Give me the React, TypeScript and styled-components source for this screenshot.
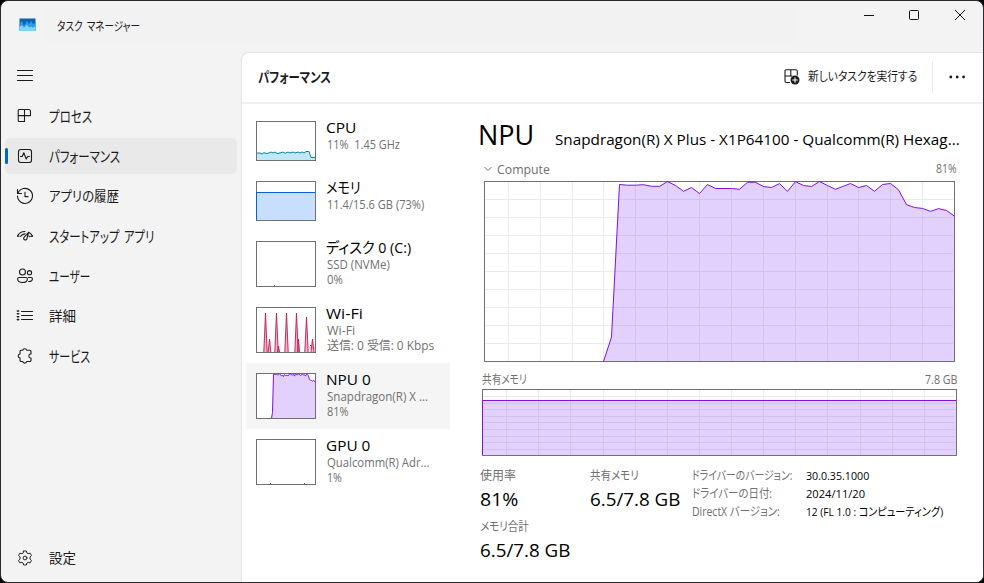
import React, { useLayoutEffect, useRef, useState } from "react";
import styled, { createGlobalStyle } from "styled-components";

const GlobalStyle = createGlobalStyle`
  * { box-sizing: border-box; }
  body {
    margin: 0;
    background: #000;
    font-family: "Open Sans", "Noto Sans CJK JP", sans-serif;
    color: #1b1b1b;
  }
`;

const FitBox = styled.span<{ $w: number }>`
  display: block;
  width: ${(p) => p.$w}px;
  flex: none;
  white-space: pre;
`;
const FitText = styled.span`
  display: inline-block;
  vertical-align: top;
  transform-origin: 0 50%;
  font-feature-settings: "palt";
`;

/* Condenses a label horizontally so that it fills exactly the given width. */
function Fit({ w, children }: { w: number; children: React.ReactNode }) {
  const ref = useRef<HTMLSpanElement>(null);
  const [scale, setScale] = useState(1);
  useLayoutEffect(() => {
    if (ref.current) setScale(w / ref.current.offsetWidth);
  }, [w]);
  return (
    <FitBox $w={w}>
      <FitText ref={ref} style={{ transform: `scaleX(${scale})` }}>{children}</FitText>
    </FitBox>
  );
}

const Window = styled.div`
  width: 984px;
  height: 583px;
  display: flex;
  flex-direction: column;
  border: 1px solid #2d2a2e;
  border-radius: 8px;
  background: #f3f3f3;
  overflow: hidden;
`;
const TitleBar = styled.header`
  display: flex;
  height: 51px;
  flex: none;
`;
const AppMark = styled.div`
  width: 45px;
  padding: 17px 0 0 18px;
  svg { display: block; }
`;
const DragRegion = styled.div`
  width: 751px;
  height: 36px;
  margin-top: 7px;
  padding-left: 11px;
  background: #f2f2f2;
  font-size: 12.5px;
  line-height: 37px;
  word-spacing: 2px;
`;
const Caption = styled.div`
  margin-left: auto;
  display: flex;
  height: 28px;
`;
const CaptionButton = styled.button`
  width: 46px;
  padding: 0;
  border: 0;
  background: none;
  display: grid;
  place-items: center;
`;
const Columns = styled.div`
  display: flex;
  flex: 1;
  min-height: 0;
`;
const Sidebar = styled.nav`
  width: 240px;
  flex: none;
  display: flex;
  flex-direction: column;
  gap: 4px;
  padding: 6px 4px 6px;
`;
const NavItem = styled.button<{ $active?: boolean; $bottom?: boolean; $size?: number }>`
  width: 232px;
  height: 36px;
  flex: none;
  margin: ${(p) => (p.$bottom ? "auto 0 0" : "0")};
  padding: 0;
  border: 0;
  border-radius: 5px;
  display: flex;
  align-items: center;
  background: ${(p) => (p.$active ? "#e9e9e9" : "transparent")};
  color: #1b1b1b;
  font: inherit;
  font-size: ${(p) => p.$size ?? 14}px;
  line-height: 20px;
  word-spacing: 2px;
  svg { width: 18px; height: 18px; margin-right: 15px; flex: none; }
`;
const Marker = styled.i<{ $on?: boolean }>`
  width: 3px;
  height: 16px;
  margin-right: 8px;
  border-radius: 2px;
  background: ${(p) => (p.$on ? "#0067c0" : "transparent")};
`;
const Panel = styled.main`
  flex: 1;
  min-width: 0;
  display: flex;
  flex-direction: column;
  background: #fff;
  border: 1px solid #e5e5e5;
  border-width: 1px 0 0 1px;
  border-top-left-radius: 8px;
`;
const Toolbar = styled.div`
  height: 51px;
  flex: none;
  display: flex;
  align-items: center;
  padding: 0 0 1px 15px;
  border-bottom: 2px solid #f0f0f0;
`;
const Heading = styled.h1`
  margin: 0 auto 0 0;
  padding-left: 1px;
  font-size: 14px;
  line-height: 20px;
  font-weight: 600;
`;
const ToolButton = styled.button`
  display: flex;
  align-items: center;
  gap: 8px;
  padding: 0;
  border: 0;
  background: none;
  color: #1b1b1b;
  font: inherit;
  font-size: 12.5px;
  line-height: 20px;
`;
const Rule = styled.i`
  width: 1px;
  height: 32px;
  margin: 0 16px 0 15px;
  background: #ebebeb;
`;
const MoreButton = styled(ToolButton)`
  width: 34px;
`;
const Body = styled.div`
  flex: 1;
  min-height: 0;
  display: flex;
`;
const ResourceList = styled.div`
  width: 208px;
  flex: none;
  padding: 7px 0 0 4px;
`;
const Resource = styled.div<{ $active?: boolean; $h: number }>`
  width: 204px;
  height: ${(p) => p.$h}px;
  display: flex;
  gap: 10px;
  padding-left: 10px;
  background: ${(p) => (p.$active ? "#f5f5f5" : "transparent")};
  svg { margin-top: 10px; flex: none; }
`;
const ResourceText = styled.div`
  padding-top: 6px;
`;
const ResourceName = styled.div`
  color: #000;
  font-size: 15px;
  line-height: 20px;
`;
const ResourceInfo = styled.div`
  color: #707070;
  font-size: 12px;
  line-height: 15px;
  padding-left: 1px;
`;
const Detail = styled.section`
  flex: 1;
  padding: 11px 0 0 28px;
  color: #000;
`;
const DetailTitle = styled.div`
  display: flex;
  align-items: baseline;
  height: 41px;
  gap: 21px;
  line-height: 40px;
`;
const BigName = styled.div`
  font-size: 27px;
`;
const DeviceName = styled.div`
  font-size: 15px;
`;
const ChartCaption = styled.div<{ $inset: number; $h: number; $drop?: number }>`
  display: flex;
  align-items: center;
  justify-content: space-between;
  width: 479px;
  height: ${(p) => p.$h}px;
  padding-top: ${(p) => p.$drop ?? 0}px;
  padding-left: ${(p) => p.$inset}px;
  color: #707070;
  font-size: 12px;
  line-height: 18px;
`;
const CaptionLabel = styled.div<{ $size?: number }>`
  display: flex;
  align-items: center;
  gap: 5px;
  font-size: ${(p) => p.$size ?? 12}px;
`;
const ChartArea = styled.div<{ $inset: number }>`
  padding-left: ${(p) => p.$inset}px;
  svg { display: block; }
`;
const Stats = styled.div`
  display: flex;
  padding: 11px 0 0 2px;
`;
const StatColumn = styled.div<{ $w: number }>`
  width: ${(p) => p.$w}px;
`;
const StatLabel = styled.div`
  color: #707070;
  font-size: 12px;
  line-height: 18px;
`;
const StatValue = styled.div`
  height: 33px;
  font-size: 19px;
  line-height: 28px;
`;
const Facts = styled.dl`
  margin: 0;
  display: grid;
  grid-template-columns: 114px auto;
  grid-auto-rows: 18px;
  line-height: 18px;
  font-size: 12px;
  dt { color: #707070; }
  dd { margin: 0; font-size: 11.5px; }
`;

const stroke = { fill: "none", stroke: "#1b1b1b", strokeWidth: 1.1, strokeLinecap: "round", strokeLinejoin: "round" } as const;

const icons: Record<string, React.ReactNode> = {
  menu: <path d="M1.5 3.5h15M1.5 8.5h15M1.5 13.5h15" strokeWidth="1" />,
  processes: <path d="M3.2 2.5h9.3a2 2 0 0 1 2 2v4.1H2.2V3.5a1 1 0 0 1 1-1zM2.2 8.6v4.9a1 1 0 0 0 1 1h5.3v-12M14.4 8.6H2.2" />,
  performance: <g><rect x="2.5" y="2.5" width="13" height="13" rx="2.2" /><path d="M4.5 9.5h1.7l1.6-3.8 2.4 6.3 1.5-2.5h1.8" /></g>,
  history: <g><path d="M1.5 2.5v4h4M2 6.2A7.5 7.5 0 1 1 1.5 9M9 5.3v4.3h3" /></g>,
  startup: <g><path d="M1.5 9.1C2.8 6.3 5.6 4.5 9 4.5M12.6 5.3c1.7.8 3.1 2.1 3.9 3.8M4.5 9.4C5.6 8 7 7 9 6.9M12.7 8.8l.9.8" /><path d="M12.6 5.4 10.8 12a1.6 1.6 0 1 1-3-1.3zM1.5 9.1l1.7.2M16.5 9.1l-1.7.3" /></g>,
  users: <g><circle cx="6.5" cy="5" r="3" /><circle cx="13.5" cy="5.7" r="2.1" /><path d="M3 10.5h7a1.4 1.4 0 0 1 1.4 1.4c0 2.3-1.8 3.6-4.9 3.6s-4.9-1.3-4.9-3.6A1.4 1.4 0 0 1 3 10.5zM12.5 10.5h2.6a1.3 1.3 0 0 1 1.3 1.3c0 2-1.5 2.8-3.8 2.7" /></g>,
  details: <g><path d="M5.5 4.5h11M5.5 8.5h11M5.5 12.5h11" /><path d="M1.4 4h1.2M1.4 6.8h1.2M1.4 9.8h1.2M1.4 12.6h1.2" strokeWidth="1.6" /></g>,
  services: <path d="M6.8 3.3c.1-2 3.7-2 3.9 0h3.1a1.2 1.2 0 0 1 1.2 1.2v2.4c-2.8-.2-2.9 4.4 0 4.2v2.2a1.2 1.2 0 0 1-1.2 1.2h-3.1c-.2 2.1-3.8 2.1-3.9 0H5.2A1.2 1.2 0 0 1 4 13.3v-2.5c-2.4-.2-2.4-3.5 0-3.8V4.5a1.2 1.2 0 0 1 1.2-1.2z" />,
  settings: <g strokeWidth=".95"><circle cx="9" cy="9" r="1.9" /><path d="M7.6 2h2.8l.5 2 1.2.7 2-.6 1.4 2.4-1.5 1.4v2.2l1.5 1.4-1.4 2.4-2-.6-1.2.7-.5 2H7.6l-.5-2-1.2-.7-2 .6-1.4-2.4L4 10.1V7.9L2.5 6.5l1.4-2.4 2 .6L7.1 4z" /></g>,
};

function Icon({ name }: { name: string }) {
  return <svg viewBox="0 0 18 18" {...stroke}>{icons[name]}</svg>;
}

const navItems = [
  { icon: "processes", label: "プロセス", w: 43, size: 15 },
  { icon: "performance", label: "パフォーマンス", w: 71, size: 15, active: true },
  { icon: "history", label: "アプリの履歴", w: 70 },
  { icon: "startup", label: "スタートアップ アプリ", w: 105, size: 15 },
  { icon: "users", label: "ユーザー", w: 41, size: 15 },
  { icon: "details", label: "詳細", w: 27 },
  { icon: "services", label: "サービス", w: 41, size: 15 },
];

const npuPoints: [number, number][] = [
  [119.5, 180.5], [127.5, 156], [135.5, 3.5], [143.5, 4.2], [151.5, 4.2], [159.5, 3.7], [167.5, 5.3], [175.8, 5.3],
  [183.5, 0.5], [191.5, 4.5], [199.5, 10.3], [207.5, 6.5], [215.5, 12.5], [223.5, 3.5], [231.5, 7.5], [247.5, 7.5],
  [255.5, 8.3], [263.5, 1.3], [271.5, 1.3], [279.5, 5.5], [287.5, 6.5], [295.5, 2.6], [303.5, 10.3], [311.5, 0.6],
  [319.5, 4.5], [327.5, 5.5], [335.5, 0.5], [343.5, 4.5], [351.5, 8.3], [359.5, 5.2], [366.5, 2.5], [374.5, 6.5],
  [382.5, 4.5], [390.5, 10.3], [398.5, 3.5], [406.5, 2.5], [414.5, 8.8], [422.5, 23.6], [430.5, 26.5], [438.5, 27.4],
  [446.5, 30.4], [454.5, 27.6], [462.5, 29.5], [470.5, 35.2],
];

const PURPLE = "#7f11e6";
const PURPLE_FILL = "#8b43f740";
const GRAY = "#707070";
const gridX = [24, 56, 88, 119, 151, 183, 215, 247, 279, 311, 343, 374, 406, 438];
const memGridX = [24, 56, 88, 121, 153, 185, 217, 249, 281, 313, 345, 378, 410, 442];
const memGridY = [7, 14, 20, 27, 33, 40, 47, 53, 60];

const toLine = (pts: [number, number][]) => pts.map(([x, y]) => `${x},${y}`).join(" ");

function NpuChart() {
  const line = toLine(npuPoints);
  return (
    <svg width="471" height="181">
      <path stroke="#ebebeb" d={gridX.map((x) => `M${x + 0.5} 1v179`).join("") + Array.from({ length: 9 }, (_, i) => `M1 ${18.5 + i * 18}h468`).join("")} />
      <polygon points={`${line} 470.5,180.5`} fill={PURPLE_FILL} />
      <rect x=".5" y=".5" width="470" height="180" fill="none" stroke={GRAY} />
      <polyline points={line} fill="none" stroke={PURPLE} />
    </svg>
  );
}

function SharedMemoryChart() {
  return (
    <svg width="475" height="67">
      <path stroke="#ebebeb" d={memGridX.map((x) => `M${x + 0.5} 1v65`).join("") + memGridY.map((y) => `M1 ${y + 0.5}h472`).join("")} />
      <rect x="1" y="12" width="473" height="54" fill={PURPLE_FILL} />
      <rect x=".5" y=".5" width="474" height="66" fill="none" stroke={GRAY} />
      <path d="M.5 66V11.5H474" fill="none" stroke={PURPLE} />
    </svg>
  );
}

function Thumb({ h, children }: { h: number; children?: React.ReactNode }) {
  return (
    <svg width="60" height={h} fill="none">
      <rect x=".5" y=".5" width="59" height={h - 1} fill="#fff" />
      {children}
    </svg>
  );
}
const Frame = ({ h }: { h: number }) => <rect x=".5" y=".5" width="59" height={h - 1} stroke={GRAY} />;

const cpuLine = "1,32 4,32 6,33 8,31.5 10,32.5 13,32 15,31 17,32 19,31 21,32.5 24,32 27,31 29,32.3 32,31 34,32 37,31 39,32 42,31 44,32 46,31 48,32 50,30.5 53,30.5 55,36.5 59,36.5";
const npuThumb = toLine(npuPoints.map(([x, y]) => [Math.round((x / 471) * 590) / 10 + 0.5, Math.round((y / 181) * 450) / 10 + 0.5]));

const thumbs: Record<string, React.ReactNode> = {
  cpu: <Thumb h={40}><polygon points={`1,39 ${cpuLine} 59,39`} fill="#bfe9f9" /><polyline points={cpuLine} stroke="#11809c" /><Frame h={40} /></Thumb>,
  memory: <Thumb h={40}><rect x="1" y="11" width="58" height="28" fill="#c7deff" /><Frame h={40} /><path d="M.5 39V11.5H59" stroke="#0a5fd8" /></Thumb>,
  disk: <Thumb h={46}><Frame h={46} /><path d="M18 44.5h1" stroke="#8a8a50" /></Thumb>,
  wifi: (
    <Thumb h={46}>
      <g fill="#c2185b55" stroke="#c01850" strokeWidth=".9">
        <path d="M7.8 45 9.5 6l1.7 39M12.2 45l1.3-13 1.3 13M18.8 45 20.5 6l1.7 39M21.5 45l1-6 1 6M28.8 45 30.5 6l1.7 39M38.8 45 40.5 6l1.7 39M41.5 45l1-13 1 13M48.8 45 50.5 10l1.7 35M55 45l1.5-13 1.5 13" />
      </g>
      <path d="M53.5 41h5M54 38.5h2" stroke="#c01850" strokeDasharray="1 1" />
      <Frame h={46} />
    </Thumb>
  ),
  npu: <Thumb h={46}><polygon points={`${npuThumb} 59.5,45.5`} fill="#e2d0fd" /><Frame h={46} /><polyline points={npuThumb} stroke={PURPLE} /></Thumb>,
  gpu: <Thumb h={46}><Frame h={46} /><path d="M14 44.5h1M48 44.5h1" stroke={PURPLE} /></Thumb>,
};

type Line = [string, number];
const resources: { id: string; h: number; name: Line; info: Line[] }[] = [
  { id: "cpu", h: 60, name: ["CPU", 30], info: [["11%  1.45 GHz", 73]] },
  { id: "memory", h: 60, name: ["メモリ", 35], info: [["11.4/15.6 GB (73%)", 97]] },
  { id: "disk", h: 66, name: ["ディスク 0 (C:)", 85], info: [["SSD (NVMe)", 63], ["0%", 16]] },
  { id: "wifi", h: 66, name: ["Wi-Fi", 37], info: [["Wi-Fi", 28], ["送信: 0 受信: 0 Kbps", 107]] },
  { id: "npu", h: 66, name: ["NPU 0", 45], info: [["Snapdragon(R) X ...", 101], ["81%", 22]] },
  { id: "gpu", h: 66, name: ["GPU 0", 44], info: [["Qualcomm(R) Adr...", 102], ["1%", 15]] },
];

const facts: [Line, Line][] = [
  [["ドライバーのバージョン:", 100], ["30.0.35.1000", 63]],
  [["ドライバーの日付:", 80], ["2024/11/20", 59]],
  [["DirectX バージョン:", 88], ["12 (FL 1.0 : コンピューティング)", 137]],
];

function AppLogo() {
  return (
    <svg width="17" height="13">
      <rect x=".5" y=".5" width="16" height="12" fill="#0a63b5" />
      <path d="M.5 6 3 3l2 5 3-5 2 3 2.5-3 1.5 3 2.5-1v8H.5z" fill="#2b9be4" />
      <path d="M.5 8.5 3 7.5l2 2 3-3 2 3 2-1 2 1 2.5-1.5v5H.5z" fill="#7dd3fb" />
    </svg>
  );
}

export default function App() {
  return (
    <>
      <GlobalStyle />
      <Window>
        <TitleBar>
          <AppMark><AppLogo /></AppMark>
          <DragRegion><Fit w={83}>タスク マネージャー</Fit></DragRegion>
          <Caption>
            <CaptionButton aria-label="minimize"><svg width="12" height="12"><path d="M2 6.5h10" stroke="#111" /></svg></CaptionButton>
            <CaptionButton aria-label="maximize"><svg width="12" height="12"><rect x="1.5" y="1.5" width="9" height="9" rx="1" fill="none" stroke="#111" /></svg></CaptionButton>
            <CaptionButton aria-label="close"><svg width="12" height="12"><path d="m1 1 10 10M11 1 1 11" stroke="#111" /></svg></CaptionButton>
          </Caption>
        </TitleBar>
        <Columns>
          <Sidebar>
            <NavItem aria-label="menu"><Marker /><Icon name="menu" /></NavItem>
            {navItems.map((n) => (
              <NavItem key={n.icon} $active={n.active} $size={n.size}>
                <Marker $on={n.active} />
                <Icon name={n.icon} />
                <Fit w={n.w}>{n.label}</Fit>
              </NavItem>
            ))}
            <NavItem $bottom><Marker /><Icon name="settings" /><Fit w={27}>設定</Fit></NavItem>
          </Sidebar>
          <Panel>
            <Toolbar>
              <Heading><Fit w={73}>パフォーマンス</Fit></Heading>
              <ToolButton>
                <svg width="16" height="16" {...stroke}>
                  <path d="M5.5 13.5h-3a1.5 1.5 0 0 1-1.5-1.5V2A1.2 1.2 0 0 1 2.2.7h9.6A1.5 1.5 0 0 1 13.3 2v4M6.8.7v6.5M1 7h7" />
                  <circle cx="11" cy="11" r="4.5" fill="#1b1b1b" stroke="none" />
                  <path d="M8.7 11h4.6M11 8.7v4.6" stroke="#fff" />
                </svg>
                <Fit w={109}>新しいタスクを実行する</Fit>
              </ToolButton>
              <Rule />
              <MoreButton aria-label="more">
                <svg width="18" height="6" fill="#1b1b1b"><circle cx="1.8" cy="3" r="1.4" /><circle cx="8.2" cy="3" r="1.4" /><circle cx="14.6" cy="3" r="1.4" /></svg>
              </MoreButton>
            </Toolbar>
            <Body>
              <ResourceList>
                {resources.map((r) => (
                  <Resource key={r.id} $h={r.h} $active={r.id === "npu"}>
                    {thumbs[r.id]}
                    <ResourceText>
                      <ResourceName><Fit w={r.name[1]}>{r.name[0]}</Fit></ResourceName>
                      {r.info.map(([t, w]) => <ResourceInfo key={t}><Fit w={w}>{t}</Fit></ResourceInfo>)}
                    </ResourceText>
                  </Resource>
                ))}
              </ResourceList>
              <Detail>
                <DetailTitle>
                  <BigName><Fit w={56}>NPU</Fit></BigName>
                  <DeviceName><Fit w={405}>Snapdragon(R) X Plus - X1P64100 - Qualcomm(R) Hexag...</Fit></DeviceName>
                </DetailTitle>
                <ChartCaption $inset={6} $h={25}>
                  <CaptionLabel $size={13}>
                    <svg width="8" height="6"><path d="m.5 1 3.5 3.5L7.5 1" fill="none" stroke={GRAY} /></svg>
                    <Fit w={53}>Compute</Fit>
                  </CaptionLabel>
                  <Fit w={21}>81%</Fit>
                </ChartCaption>
                <ChartArea $inset={6}><NpuChart /></ChartArea>
                <ChartCaption $inset={4} $h={27} $drop={9}>
                  <CaptionLabel><Fit w={45}>共有メモリ</Fit></CaptionLabel>
                  <Fit w={32}>7.8 GB</Fit>
                </ChartCaption>
                <ChartArea $inset={4}><SharedMemoryChart /></ChartArea>
                <Stats>
                  <StatColumn $w={110}>
                    <StatLabel><Fit w={36}>使用率</Fit></StatLabel>
                    <StatValue><Fit w={38}>81%</Fit></StatValue>
                    <StatLabel><Fit w={49}>メモリ合計</Fit></StatLabel>
                    <StatValue><Fit w={90}>6.5/7.8 GB</Fit></StatValue>
                  </StatColumn>
                  <StatColumn $w={102}>
                    <StatLabel><Fit w={49}>共有メモリ</Fit></StatLabel>
                    <StatValue><Fit w={90}>6.5/7.8 GB</Fit></StatValue>
                  </StatColumn>
                  <Facts>
                    {facts.map(([k, v]) => (
                      <React.Fragment key={k[0]}>
                        <dt><Fit w={k[1]}>{k[0]}</Fit></dt>
                        <dd><Fit w={v[1]}>{v[0]}</Fit></dd>
                      </React.Fragment>
                    ))}
                  </Facts>
                </Stats>
              </Detail>
            </Body>
          </Panel>
        </Columns>
      </Window>
    </>
  );
}
